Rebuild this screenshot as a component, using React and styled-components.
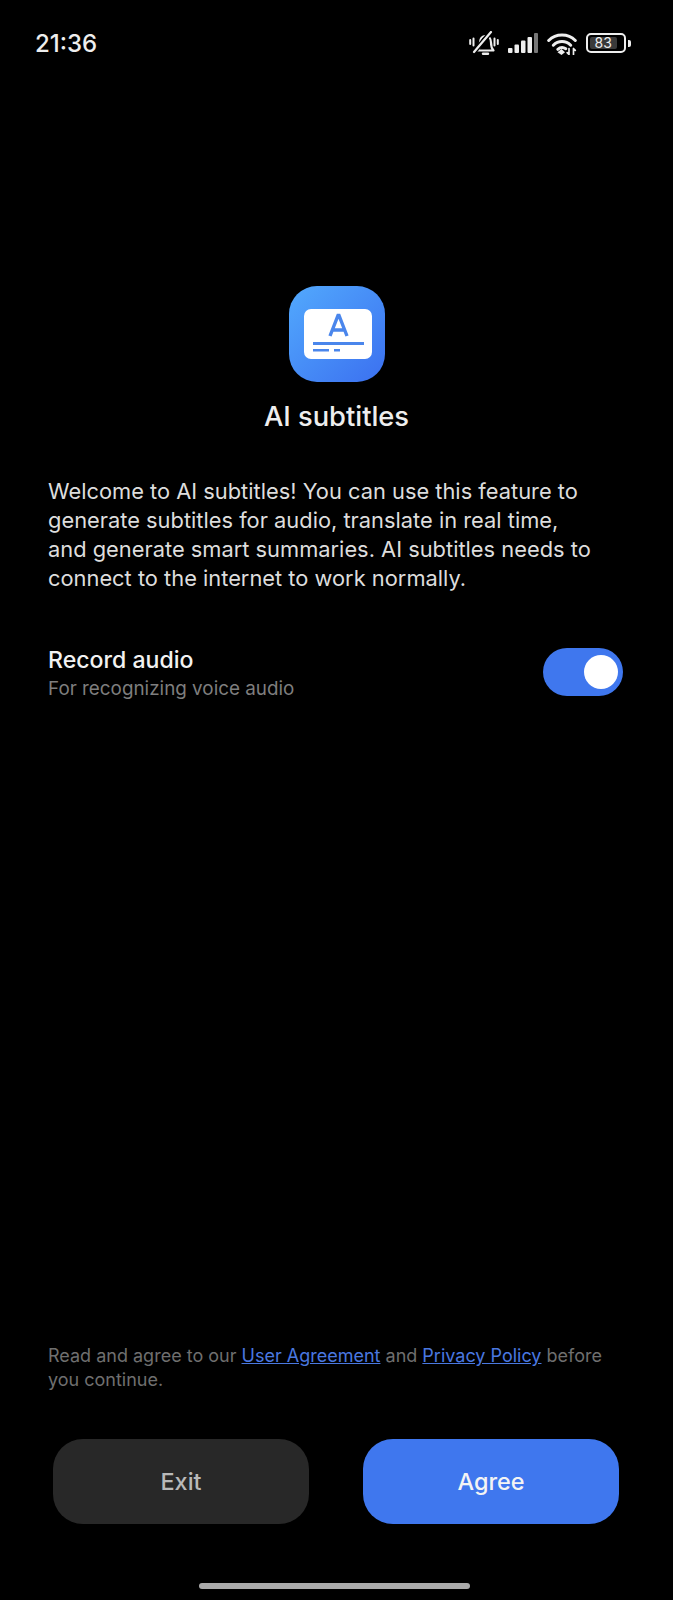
import React from "react";
import styled, { createGlobalStyle } from "styled-components";

const Global = createGlobalStyle`
  html, body {
    margin: 0;
    background: #000;
  }
  * {
    box-sizing: border-box;
  }
`;

const Page = styled.div`
  width: 673px;
  height: 1600px;
  background: #000;
  color: #fff;
  font-family: Inter, "Noto Sans", sans-serif;
  display: flex;
  flex-direction: column;
  overflow: hidden;
`;

const StatusBar = styled.div`
  height: 64px;
  padding: 22px 42px 0 35px;
  display: flex;
  justify-content: space-between;
  align-items: center;
`;

const Clock = styled.span`
  font-size: 24px;
  font-weight: 500;
  color: #eee;
`;

const StatusIcons = styled.div`
  display: flex;
  align-items: center;
  gap: 9px;
`;

const Hero = styled.div`
  margin-top: 222px;
  display: flex;
  flex-direction: column;
  align-items: center;
`;

const AppTitle = styled.h1`
  margin: 16px 0 0;
  font-size: 27.3px;
  line-height: 38px;
  font-weight: 500;
  color: #eee;
`;

const Intro = styled.p`
  margin: 41px 73px 0 48px;
  font-size: 21.85px;
  line-height: 29px;
  color: #ddd;
`;

const PermissionRow = styled.div`
  margin-top: 48px;
  padding: 0 50px 0 48px;
  display: flex;
  justify-content: space-between;
  align-items: center;
`;

const PermissionText = styled.div`
  padding-top: 4px;
`;

const PermissionName = styled.div`
  font-size: 23.1px;
  line-height: 30px;
  font-weight: 500;
  color: #f2f2f2;
`;

const PermissionHint = styled.div`
  font-size: 18.85px;
  line-height: 28px;
  color: #7e7e7e;
`;

const Switch = styled.div`
  width: 80px;
  height: 48px;
  border-radius: 24px;
  background: #3f77ee;
  padding: 7px 5px;
  display: flex;
  justify-content: flex-end;
`;

const Knob = styled.div`
  width: 34px;
  height: 34px;
  border-radius: 50%;
  background: #fff;
`;

const Footer = styled.div`
  margin-top: auto;
  display: flex;
  flex-direction: column;
`;

const Legal = styled.p`
  margin: 0 48px;
  font-size: 18px;
  line-height: 24px;
  color: #6f6f6f;
`;

const Anchor = styled.a`
  color: #4a78e0;
  text-decoration: underline;
`;

const Buttons = styled.div`
  margin-top: 47px;
  padding: 0 54px 0 53px;
  display: flex;
  justify-content: space-between;
`;

const Button = styled.div`
  width: 256px;
  height: 85px;
  border-radius: 30px;
  background: ${(p) => (p.$primary ? "#3f77ee" : "#282828")};
  color: ${(p) => (p.$primary ? "#f4f4f4" : "#b9b9b9")};
  font-size: 23.4px;
  font-weight: 500;
  display: flex;
  align-items: center;
  justify-content: center;
`;

const HomeBar = styled.div`
  width: 271px;
  height: 6px;
  border-radius: 3px;
  background: #aaa;
  margin: 59px 0 11px 199px;
`;

function BellOffIcon() {
  return (
    <svg width="30" height="24" viewBox="0 0 30 24" fill="none" stroke="#eee" strokeWidth="2.200" strokeLinecap="round" strokeLinejoin="round">
      <path d="M8.500 19.500c1.800-2 2.500-4.500 2.500-8 0-3.800 2.400-6.500 5.500-6.500s5.500 2.700 5.500 6.500c0 3.500.7 6 2.500 8z" />
      <path d="M14 22.800h5" strokeWidth="2.400" />
      <path d="M5 21 22 1" stroke="#000" strokeWidth="5" />
      <path d="M5 21 22 1" />
      <path d="M4.500 7.500v7M1.200 9v4M25.500 7.500v7M28.800 9v4" strokeWidth="2" />
    </svg>
  );
}

function SignalIcon() {
  return (
    <svg width="30" height="20" viewBox="0 0 30 20">
      <rect x="0" y="15" width="4.500" height="5" rx="1" fill="#eee" />
      <rect x="6.500" y="11.500" width="4.500" height="8.500" rx="1" fill="#eee" />
      <rect x="13" y="7.500" width="4.500" height="12.500" rx="1" fill="#eee" />
      <rect x="19.500" y="4" width="4.500" height="16" rx="1" fill="#eee" />
      <rect x="26" y="0" width="4" height="20" rx="1" fill="#777" />
    </svg>
  );
}

function WifiIcon() {
  return (
    <svg width="30" height="23" viewBox="0 0 30 23" fill="none" stroke="#eee" strokeWidth="3" strokeLinecap="round">
      <path d="M1.700 8.500C9 1.200 21 1.200 28.300 8.500" />
      <path d="M6.300 13.200c5-5 12.400-5 17.400 0" />
      <path d="M10.800 17.300c2.300-2 5.600-2.200 8-.6" />
      <path d="M10.500 20.300 14.500 17l3.500 3.300-3.500 2.700z" fill="#eee" stroke="none" />
      <path d="M22 16.500v6M22 22.500l-1.800-1.800M26.500 22.500v-6M26.500 16.500l1.800 1.800" strokeWidth="1.700" />
    </svg>
  );
}

const Battery = styled.div`
  width: 40px;
  height: 20px;
  border: 2px solid #eee;
  border-radius: 5px;
  padding: 2px;
  display: flex;
`;

const BatteryFill = styled.div`
  flex: 0 0 83%;
  background: #3a3a3a;
  border-radius: 2px;
  color: #eee;
  font-size: 14px;
  line-height: 12px;
  text-align: center;
`;

const BatteryNub = styled.div`
  width: 3px;
  height: 7px;
  margin-left: -7px;
  background: #eee;
  border-radius: 0 2px 2px 0;
`;

function AppIcon() {
  return (
    <svg width="96" height="96" viewBox="0 0 96 96">
      <defs>
        <linearGradient id="tile" x1="0" y1="0" x2="1" y2="1">
          <stop offset="0" stopColor="#52a9fd" />
          <stop offset="1" stopColor="#3b70f0" />
        </linearGradient>
      </defs>
      <rect width="96" height="96" rx="28" fill="url(#tile)" />
      <rect x="15" y="23" width="68" height="50" rx="7" fill="#fff" />
      <path d="M41 50 49 29.500h1L58 50M44 44h11.500" fill="none" stroke="#4a86ec" strokeWidth="3.400" />
      <rect x="24" y="56" width="51" height="3" fill="#4a86ec" />
      <rect x="24" y="63" width="16" height="2.500" fill="#4a86ec" />
      <rect x="45" y="63" width="6" height="2.500" fill="#4a86ec" />
    </svg>
  );
}

export default function App() {
  return (
    <Page>
      <Global />
      <StatusBar>
        <Clock>21:36</Clock>
        <StatusIcons>
          <BellOffIcon />
          <SignalIcon />
          <WifiIcon />
          <Battery>
            <BatteryFill>83</BatteryFill>
          </Battery>
          <BatteryNub />
        </StatusIcons>
      </StatusBar>
      <Hero>
        <AppIcon />
        <AppTitle>AI subtitles</AppTitle>
      </Hero>
      <Intro>
        Welcome to AI subtitles! You can use this feature to generate subtitles
        for audio, translate in real time, and generate smart summaries. AI
        subtitles needs to connect to the internet to work normally.
      </Intro>
      <PermissionRow>
        <PermissionText>
          <PermissionName>Record audio</PermissionName>
          <PermissionHint>For recognizing voice audio</PermissionHint>
        </PermissionText>
        <Switch>
          <Knob />
        </Switch>
      </PermissionRow>
      <Footer>
        <Legal>
          Read and agree to our <Anchor>User Agreement</Anchor> and{" "}
          <Anchor>Privacy Policy</Anchor> before you continue.
        </Legal>
        <Buttons>
          <Button>Exit</Button>
          <Button $primary>Agree</Button>
        </Buttons>
        <HomeBar />
      </Footer>
    </Page>
  );
}
